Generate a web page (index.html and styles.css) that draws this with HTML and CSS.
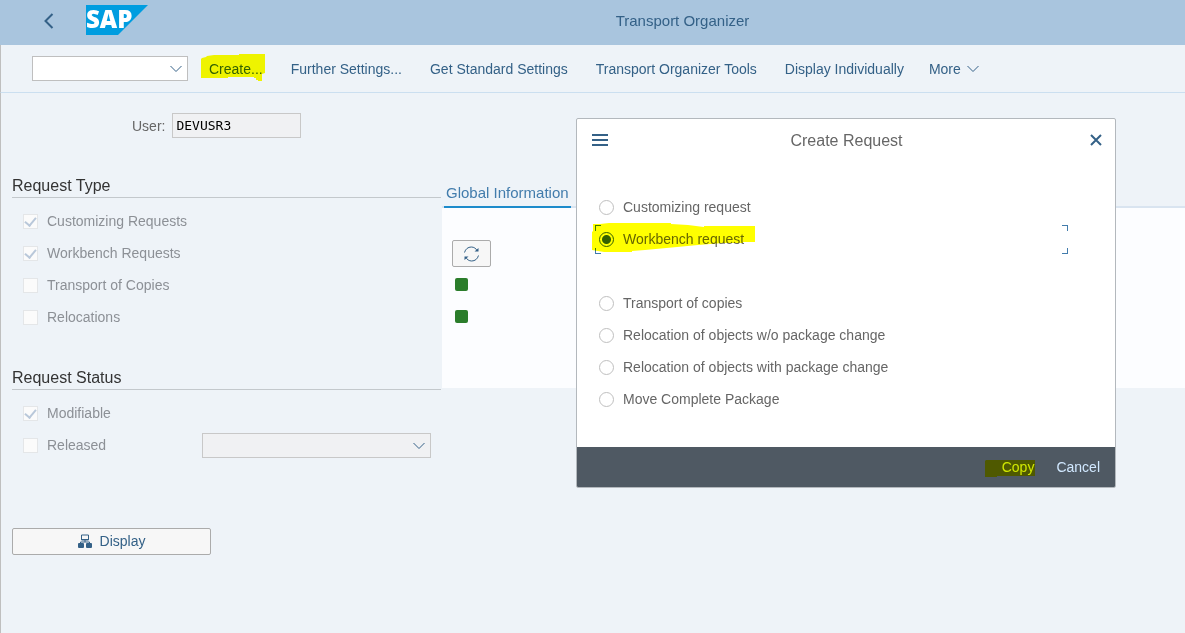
FILE: index.html
```html
<!DOCTYPE html>
<html lang="en">
<head>
<meta charset="utf-8">
<title>Transport Organizer</title>
<link rel="stylesheet" href="styles.css">
</head>
<body>
<div class="app">
  <header class="shell">
    <button class="back" type="button" aria-label="Back">
      <svg width="12" height="18" viewBox="0 0 12 18"><path d="M9.500 2L2.500 9L9.500 16" fill="none" stroke="currentColor" stroke-width="2"/></svg>
    </button>
    <svg class="logo" width="62" height="30" viewBox="0 0 62 30" role="img" aria-label="SAP">
      <path d="M0 0H62L32 30H0Z" fill="#009de0"/>
      <text class="logo-text" x="0" y="23">SAP</text>
    </svg>
    <h1 class="shell-title">Transport Organizer</h1>
  </header>

  <nav class="toolbar">
    <span class="select-box command">
      <select aria-label="Command"><option></option></select>
      <svg class="chevron" width="12" height="8" viewBox="0 0 12 8"><path d="M0.500 1L6 6.500L11.500 1"/></svg>
    </span>
    <button class="tool marked" type="button">Create...
      <svg class="marker marker-create" width="65" height="27" viewBox="0 0 65 27"><path d="M0 5L1 4L5 3L6 2L13 1H38V0H64V19L61 20V27H57V26H55V24H53V23H27V24H0Z"/></svg>
    </button>
    <button class="tool" type="button">Further Settings...</button>
    <button class="tool" type="button">Get Standard Settings</button>
    <button class="tool" type="button">Transport Organizer Tools</button>
    <button class="tool" type="button">Display Individually</button>
    <button class="tool more" type="button">More
      <svg class="chevron" width="12" height="8" viewBox="0 0 12 8"><path d="M0.500 1L6 6.500L11.500 1"/></svg>
    </button>
  </nav>

  <main class="content">
    <section class="filters">
      <div class="user-row">
        <label for="user">User:</label>
        <input id="user" class="user-input" type="text" value="DEVUSR3" readonly>
      </div>
      <h2 class="group-title">Request Type</h2>
      <div class="checks">
        <label class="check"><input type="checkbox" checked disabled>Customizing Requests</label>
        <label class="check"><input type="checkbox" checked disabled>Workbench Requests</label>
        <label class="check"><input type="checkbox" disabled>Transport of Copies</label>
        <label class="check"><input type="checkbox" disabled>Relocations</label>
      </div>
      <h2 class="group-title status-title">Request Status</h2>
      <div class="checks">
        <label class="check"><input type="checkbox" checked disabled>Modifiable</label>
        <div class="released">
          <label class="check"><input type="checkbox" disabled>Released</label>
          <span class="select-box period">
            <select aria-label="Released period" disabled><option></option></select>
            <svg class="chevron" width="12" height="8" viewBox="0 0 12 8"><path d="M0.500 1L6 6.500L11.500 1"/></svg>
          </span>
        </div>
      </div>
      <button class="display" type="button">
        <svg width="14" height="14" viewBox="0 0 14 14"><path d="M3.500 1H10.500V6H3.500ZM7 6V8M2.500 10V8H11.500V10" fill="none" stroke="currentColor" stroke-width="1"/><path d="M3 5.500H11" stroke="currentColor"/><rect x="0" y="9" width="6" height="5" rx="1" fill="currentColor"/><rect x="8" y="9" width="6" height="5" rx="1" fill="currentColor"/></svg>
        Display
      </button>
    </section>

    <section class="info">
      <div class="tabs"><button class="tab" type="button">Global Information</button></div>
      <div class="panel">
        <button class="refresh" type="button" aria-label="Refresh">
          <svg width="17" height="16" viewBox="0 0 17 16" fill="none" stroke="currentColor" stroke-width="1"><path d="M1.500 6.500C2.500 3 5 1 8.300 1C11 1 13 2.500 14.500 5M15.500 9.500C14.500 13 12 15 8.700 15C6 15 4 13.500 2.500 11"/><path d="M15.500 2V5.500H11.500ZM1.500 14V10.500H5.500Z" fill="currentColor" stroke="none"/></svg>
        </button>
        <span class="lamp"></span>
        <span class="lamp"></span>
      </div>
    </section>
  </main>

  <div class="dialog" role="dialog" aria-labelledby="dialog-title">
    <div class="dialog-head">
      <button type="button" aria-label="Menu">
        <svg width="16" height="12" viewBox="0 0 16 12"><path d="M0 0H16V2H0ZM0 5H16V7H0ZM0 10H16V12H0Z" fill="currentColor"/></svg>
      </button>
      <h2 id="dialog-title" class="dialog-title">Create Request</h2>
      <button type="button" aria-label="Close">
        <svg width="12" height="12" viewBox="0 0 12 12"><path d="M1 1L11 11M11 1L1 11" stroke="currentColor" stroke-width="2"/></svg>
      </button>
    </div>
    <div class="dialog-body">
      <label class="option"><input type="radio" name="kind">Customizing request</label>
      <label class="option"><input type="radio" name="kind" checked>Workbench request
        <i class="corner tl"></i><i class="corner tr"></i><i class="corner bl"></i><i class="corner br"></i>
        <svg class="marker marker-option" width="163" height="29" viewBox="0 0 163 29"><path d="M1 1H8L17 0H79V1L96 2L112 4V3H163V19H151V20H131L106 22L85 24L53 27L40 28V29H12L0 27V9L1 8Z"/></svg>
      </label>
      <label class="option spaced"><input type="radio" name="kind">Transport of copies</label>
      <label class="option"><input type="radio" name="kind">Relocation of objects w/o package change</label>
      <label class="option"><input type="radio" name="kind">Relocation of objects with package change</label>
      <label class="option"><input type="radio" name="kind">Move Complete Package</label>
    </div>
    <div class="dialog-foot">
      <button class="marked" type="button">Copy
        <svg class="marker marker-copy" width="50" height="17" viewBox="0 0 50 17"><path d="M0 1L1 0H50V16H12V17H0Z"/></svg>
      </button>
      <button type="button">Cancel</button>
    </div>
  </div>
</div>
</body>
</html>
```
FILE: styles.css
```css
* { box-sizing: border-box; }

body {
  margin: 0;
  background: #eef3f8;
  color: #346187;
  font: 14px/16px Arial, "Liberation Sans", sans-serif;
}

button, select, input { font: inherit; color: inherit; margin: 0; }
button { padding: 0; border: 0; background: none; cursor: pointer; white-space: nowrap; }
h1, h2 { margin: 0; font-weight: normal; }
svg { display: block; flex: none; }

.app {
  position: relative;
  min-height: 100vh;
  display: flex;
  flex-direction: column;
}

/* shell bar */
.shell {
  display: flex;
  align-items: center;
  height: 45px;
  padding: 0 0 5px 43px;
  background: #a9c5de;
}
.logo { margin-left: 31px; overflow: visible; }
.back { padding-top: 2px; }
.logo-text {
  font: 800 24px "Open Sans", "Noto Sans", sans-serif;
  fill: #fff;
}
.shell-title {
  flex: 1;
  margin-left: 32px;
  padding-top: 2px;
  text-align: center;
  font-size: 15px;
  line-height: 20px;
}

/* toolbar */
.toolbar {
  display: flex;
  align-items: center;
  height: 48px;
  padding-left: 31px;
  border-left: 1px solid #bfbfbf;
  border-bottom: 1px solid #cbdff0;
}
.tool { padding: 0 14px; line-height: 24px; }
.more { display: flex; align-items: center; gap: 6px; padding-left: 11px; }
.marked { position: relative; }

.select-box { position: relative; display: block; }
.select-box select {
  display: block;
  width: 100%;
  height: 25px;
  border: 1px solid #bfbfbf;
  border-radius: 0;
  background: #fff;
  appearance: none;
  opacity: 1;
}
.select-box .chevron { position: absolute; right: 6px; top: 9px; pointer-events: none; }
.chevron path { fill: none; stroke: #346187; stroke-width: 1; }
.command { width: 156px; margin-right: 7px; }

.marker {
  position: absolute;
  fill: #ff0;
  mix-blend-mode: multiply;
  pointer-events: none;
}
.marker-create { left: 6px; top: -3px; }

/* page body */
.content {
  flex: 1;
  display: flex;
  border-left: 1px solid #bfbfbf;
}
.filters { width: 441px; padding: 20px 1px 0 11px; }
.user-row { display: flex; align-items: center; gap: 7px; padding-left: 120px; color: #666; }
.user-input {
  width: 129px;
  height: 25px;
  padding: 0 3px;
  border: 1px solid #c8c8c8;
  background: #f0f1f3;
  color: #000;
  font: 13px "DejaVu Sans Mono", monospace;
}
.group-title {
  margin-top: 38px;
  padding-bottom: 1px;
  border-bottom: 1px solid #c3c8cc;
  color: #333;
  font-size: 16px;
  line-height: 20px;
}
.status-title { margin-top: 34px; }
.checks { padding: 7px 10px 1px 11px; }
.check {
  display: flex;
  align-items: center;
  gap: 9px;
  height: 32px;
  color: #8c9096;
}
.check input {
  width: 15px;
  height: 15px;
  display: grid;
  place-items: center;
  border: 1px solid #e4e6e8;
  background: #fbfbfb;
  appearance: none;
}
.check input:checked::after {
  content: "";
  width: 5px;
  height: 9px;
  margin-bottom: 2px;
  border: solid #b9c8da;
  border-width: 0 2px 2px 0;
  transform: rotate(40deg);
}
.released { display: flex; align-items: center; justify-content: space-between; }
.period { width: 229px; }
.period select { border-color: #c8c8c8; background: #f0f1f3; }

.display {
  display: flex;
  align-items: center;
  justify-content: center;
  gap: 8px;
  width: 199px;
  height: 27px;
  margin-top: 66px;
  padding-bottom: 1px;
  border: 1px solid #ababab;
  border-radius: 2px;
  background: #f7f7f7;
}

.info { flex: 1; padding-top: 88px; }
.tabs { display: flex; padding-left: 2px; border-bottom: 2px solid #d9e4f0; }
.tab {
  height: 27px;
  margin-bottom: -2px;
  padding: 0 2px 1px;
  border-bottom: 2px solid #1d8bcb;
  color: #427cac;
  font-size: 15px;
  line-height: 20px;
}
.panel {
  height: 180px;
  padding: 32px 10px;
  background: #fcfdff;
}
.refresh {
  display: grid;
  place-items: center;
  width: 39px;
  height: 27px;
  border: 1px solid #ababab;
  border-radius: 2px;
  background: #f7f7f7;
}
.lamp {
  display: block;
  width: 13px;
  height: 13px;
  margin: 11px 3px 19px;
  border-radius: 2px;
  background: #2b7d2b;
}

/* dialog floating above the page */
.dialog {
  position: absolute;
  left: 576px;
  top: 118px;
  width: 540px;
  border: 1px solid #b3b8bd;
  border-radius: 2px;
  background: #fff;
  overflow: hidden;
}
.dialog-head {
  display: flex;
  align-items: center;
  height: 44px;
  padding: 0 13px 0 15px;
}
.dialog-head button { padding-bottom: 2px; }
.dialog-title {
  flex: 1;
  padding-right: 5px;
  text-align: center;
  color: #666;
  font-size: 16px;
  line-height: 20px;
}
.dialog-body { padding: 28px 47px 32px 18px; }
.option {
  position: relative;
  display: flex;
  align-items: center;
  gap: 9px;
  height: 32px;
  padding-left: 4px;
  color: #666;
}
.spaced { margin-top: 32px; }
.option input {
  width: 15px;
  height: 15px;
  border: 1px solid #bfbfbf;
  border-radius: 50%;
  background: #fff;
  appearance: none;
}
.option input:checked {
  border-color: #346187;
  background: radial-gradient(circle, #346187 4px, #fff 5px);
}
.corner { position: absolute; width: 6px; height: 6px; border: 0 solid #427cac; }
.tl { left: 0; top: 2px; border-width: 1px 0 0 1px; }
.tr { right: 0; top: 2px; border-width: 1px 1px 0 0; }
.bl { left: 0; bottom: 1px; border-width: 0 0 1px 1px; }
.br { right: 0; bottom: 1px; border-width: 0 1px 1px 0; }
.marker-option { left: -3px; top: 0; }
.dialog-foot {
  display: flex;
  align-items: center;
  justify-content: flex-end;
  gap: 22px;
  height: 40px;
  padding: 0 15px;
  background: #4f5963;
  color: #d1e8ff;
}
.marker-copy { right: -1px; top: 1px; }
```
